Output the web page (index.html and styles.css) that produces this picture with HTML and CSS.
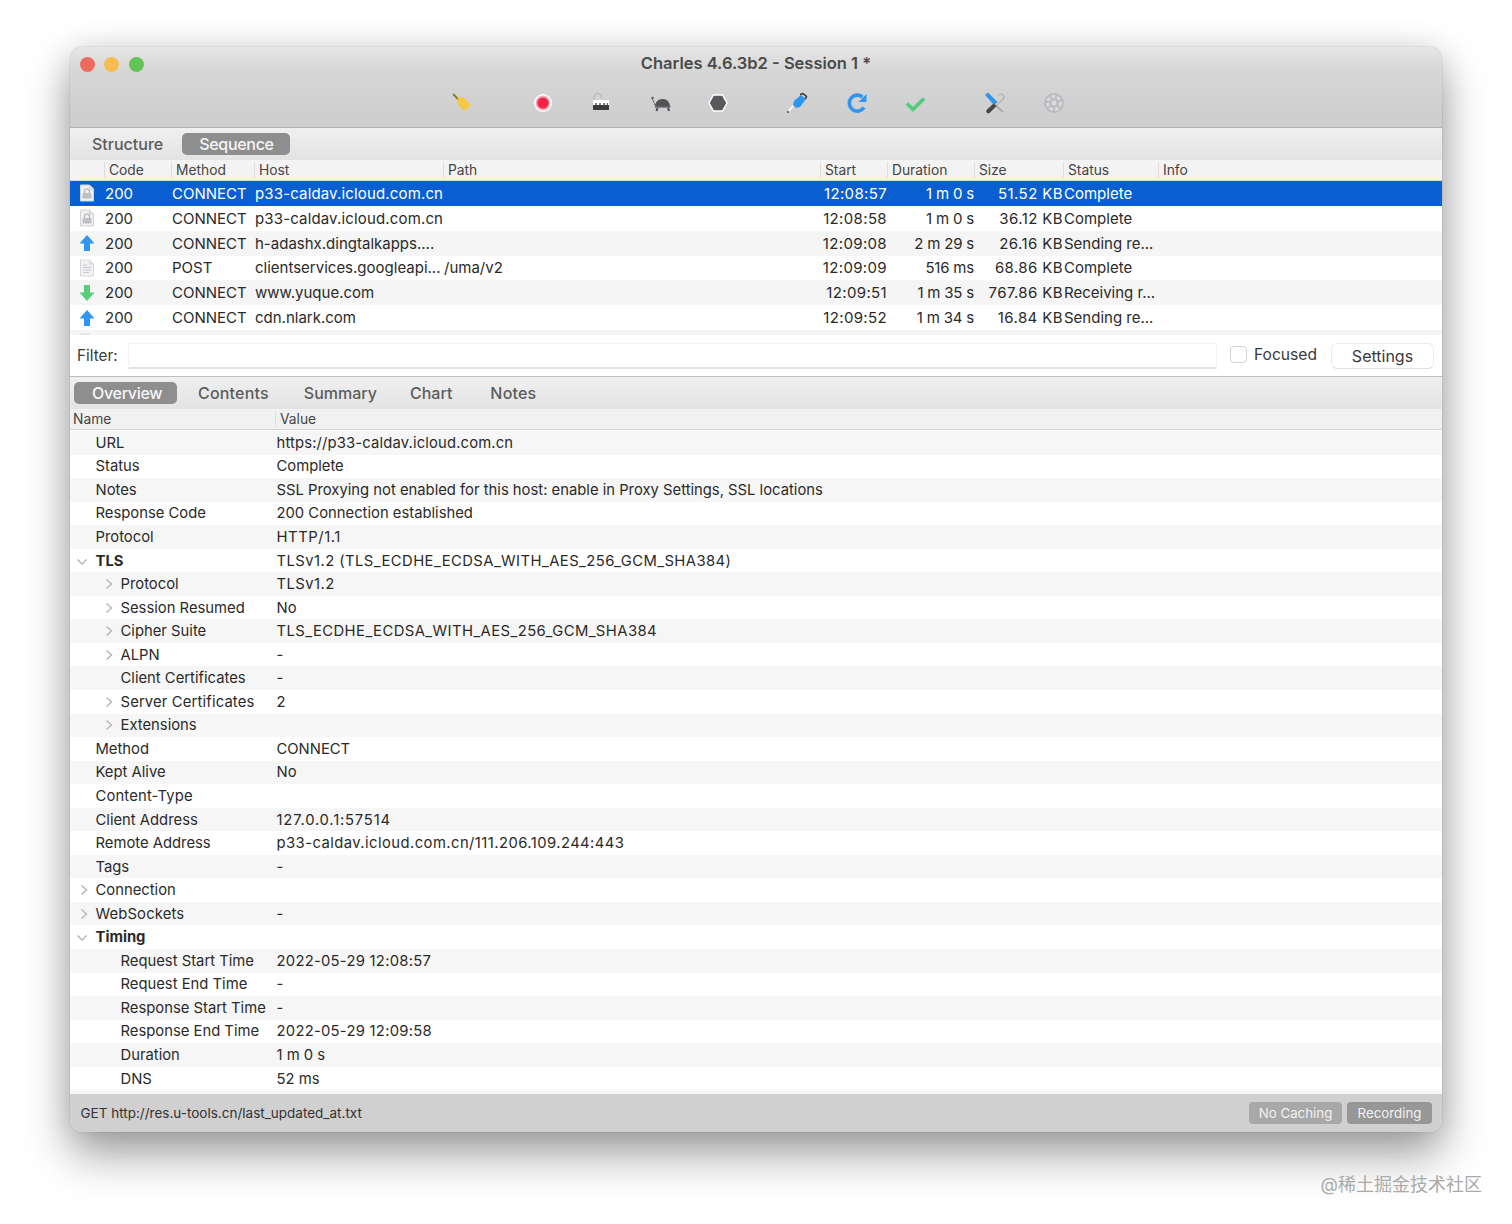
FILE: index.html
```html
<!DOCTYPE html>
<html lang="en">
<head>
  <meta charset="UTF-8" />
  <title>Charles 4.6.3b2 - Session 1 *</title>
  <link rel="stylesheet" href="styles.css">
</head>
<body>
  <svg class="defs" width="0" height="0">
    <symbol id="doc" viewBox="0 0 16 18">
      <path d="M1.500 1h9l4 4v12h-13z" fill="#f0f0f2" stroke="#d4d4d8"/>
      <path d="M10.500 1v4h4" fill="#e0e0e4" stroke="#d4d4d8"/>
      <path d="M5.500 9V7.500a2.500 2.500 0 0 1 5 0V9" fill="none" stroke="#b4b4b8" stroke-width="1.200"/>
      <rect x="3.500" y="9" width="9" height="5.500" rx="1" fill="#c0c0c4"/>
    </symbol>
    <symbol id="textdoc" viewBox="0 0 16 18">
      <path d="M1.500 1h9l4 4v12h-13z" fill="#f2f2f4" stroke="#d8d8dc"/>
      <path d="M10.500 1v4h4" fill="#e4e4e8" stroke="#d8d8dc"/>
      <path d="M4 6h4M4 8.500h8M4 11h8M4 13.500h6" stroke="#c8c8cc" stroke-width="1"/>
    </symbol>
    <symbol id="up" viewBox="0 0 16 18">
      <path d="M8 1l7.500 8.500H11V17H5V9.500H.5z" fill="#2f95ee"/>
    </symbol>
    <symbol id="down" viewBox="0 0 16 18">
      <path d="M8 17L.5 8.500H5V1h6v7.500h4.500z" fill="#57cf78"/>
    </symbol>
    <symbol id="twist-r" viewBox="0 0 10 12">
      <path d="M2.500 1.500L7.500 6l-5 4.500" fill="none" stroke="#b8b8b8" stroke-width="1.500"/>
    </symbol>
    <symbol id="twist-d" viewBox="0 0 12 10">
      <path d="M1.500 2.500L6 7l4.500-4.500" fill="none" stroke="#b8b8b8" stroke-width="1.500"/>
    </symbol>
  </svg>

  <div class="window">
    <header class="titlebar">
      <div class="title-row">
        <div class="lights">
          <span class="light red"></span>
          <span class="light yellow"></span>
          <span class="light green"></span>
        </div>
        <div class="title">Charles 4.6.3b2 - Session 1 *</div>
      </div>
      <div class="toolbar">
        <svg class="tool t-broom" viewBox="0 0 22 22">
          <path d="M2 2l6 6" stroke="#8f7a35" stroke-width="2"/>
          <path d="M7 6l5-1 8 8-7 6-7-8z" fill="#f4c93c"/>
        </svg>
        <svg class="tool t-record" viewBox="0 0 22 22">
          <circle cx="11" cy="11" r="9" fill="#fff"/>
          <circle cx="11" cy="11" r="7.400" fill="#f3a9b6"/>
          <circle cx="11" cy="11" r="5.600" fill="#ee2449"/>
        </svg>
        <svg class="tool t-throttle" viewBox="0 0 22 22">
          <path d="M4 8V5a3.500 3.500 0 0 1 7 0v1" fill="none" stroke="#bdbdbd" stroke-width="1.500"/>
          <rect x="3" y="8" width="16" height="5" fill="#fff"/>
          <rect x="3" y="13" width="16" height="5" fill="#3b3b3e"/>
          <path d="M5 12h2M9 12h2M13 12h2M16.500 12h1.500" stroke="#555" stroke-width="1.400"/>
        </svg>
        <svg class="tool t-turtle" viewBox="0 0 22 22">
          <path d="M5 15c0-5 3-8 7.500-8S20 10 20 15z" fill="#525357"/>
          <path d="M5 15h15.500" stroke="#6a6a6e" stroke-width="1.500"/>
          <path d="M7.500 16l-1 3M18 16l1 3" stroke="#525357" stroke-width="2.200"/>
          <path d="M5 13L2.500 7" stroke="#5a5a5a" stroke-width="1.200" stroke-dasharray="2 1"/>
          <circle cx="2.500" cy="6" r="1.200" fill="#525357"/>
        </svg>
        <svg class="tool t-stop" viewBox="0 0 22 22">
          <path d="M6.500 3h9L20 11l-4.500 8h-9L2 11z" fill="#59595d" stroke="#fff" stroke-width="1.500"/>
        </svg>
        <svg class="tool t-pen" viewBox="0 0 22 22">
          <path d="M1.500 20.500l6-7" stroke="#f2f2f2" stroke-width="2"/>
          <circle cx="2" cy="20" r="1" fill="#444"/>
          <path d="M8 9l7-6 5 4-6 8-4 1-3-3z" fill="#2f95ee"/>
          <path d="M14 2.500l3-1 3.500 3-1 2.500" fill="none" stroke="#333" stroke-width="1.500"/>
        </svg>
        <svg class="tool t-repeat" viewBox="0 0 22 22">
          <path d="M18 15.500A8 8 0 1 1 16.500 5" fill="none" stroke="#2f95ee" stroke-width="3.600"/>
          <path d="M12.500 10h8V2z" fill="#2f95ee"/>
        </svg>
        <svg class="tool t-check" viewBox="0 0 22 22">
          <path d="M3 11.500l6 6 11-11" fill="none" stroke="#52cc7c" stroke-width="3.600"/>
        </svg>
        <svg class="tool t-tools" viewBox="0 0 22 22">
          <path d="M14.500 3.500a3 3 0 1 1 3.500 4.500L6 20" fill="none" stroke="#b4b4b8" stroke-width="1.300"/>
          <path d="M11 13l8 7" stroke="#a8a8ac" stroke-width="1.700"/>
          <path d="M1 3l3-2.500 9.500 9.500-3.500 3z" fill="#2f95ee"/>
          <path d="M9.500 11.500L2.500 18a2.200 2.200 0 0 0 3 3l7-7z" fill="#45464a"/>
        </svg>
        <svg class="tool t-gear" viewBox="0 0 22 22">
          <circle cx="11" cy="11" r="10" fill="#bcbcc0"/>
          <circle cx="11" cy="11" r="6.500" fill="none" stroke="#dadade" stroke-width="3" stroke-dasharray="3.500 2"/>
          <circle cx="11" cy="11" r="2.500" fill="#dadade"/>
        </svg>
      </div>
    </header>

    <div class="tabs tabs-top">
      <span class="tab">Structure</span>
      <span class="tab active">Sequence</span>
    </div>

    <div class="req-head">
      <span class="h-icon"></span>
      <span class="h-code">Code</span>
      <span class="h-method">Method</span>
      <span class="h-host">Host</span>
      <span class="h-path">Path</span>
      <span class="h-start">Start</span>
      <span class="h-dur">Duration</span>
      <span class="h-size">Size</span>
      <span class="h-status">Status</span>
      <span class="h-info">Info</span>
    </div>

    <div class="req-list">
      <div class="req selected">
        <span class="c-icon"><svg><use href="#doc"/></svg></span>
        <span class="c-code">200</span><span class="c-method">CONNECT</span>
        <span class="c-host sp-1">p33-caldav.icloud.com.cn</span><span class="c-path"></span>
        <span class="c-start">12:08:57</span><span class="c-dur">1 m 0 s</span>
        <span class="c-size">51.52 KB</span><span class="c-status">Complete</span>
      </div>
      <div class="req">
        <span class="c-icon"><svg><use href="#doc"/></svg></span>
        <span class="c-code">200</span><span class="c-method">CONNECT</span>
        <span class="c-host sp-1">p33-caldav.icloud.com.cn</span><span class="c-path"></span>
        <span class="c-start">12:08:58</span><span class="c-dur">1 m 0 s</span>
        <span class="c-size">36.12 KB</span><span class="c-status">Complete</span>
      </div>
      <div class="req">
        <span class="c-icon"><svg><use href="#up"/></svg></span>
        <span class="c-code">200</span><span class="c-method">CONNECT</span>
        <span class="c-host">h-adashx.dingtalkapps....</span><span class="c-path"></span>
        <span class="c-start">12:09:08</span><span class="c-dur">2 m 29 s</span>
        <span class="c-size">26.16 KB</span><span class="c-status">Sending re...</span>
      </div>
      <div class="req">
        <span class="c-icon"><svg><use href="#textdoc"/></svg></span>
        <span class="c-code">200</span><span class="c-method">POST</span>
        <span class="c-host">clientservices.googleapi...</span><span class="c-path">/uma/v2</span>
        <span class="c-start">12:09:09</span><span class="c-dur">516 ms</span>
        <span class="c-size">68.86 KB</span><span class="c-status">Complete</span>
      </div>
      <div class="req">
        <span class="c-icon"><svg><use href="#down"/></svg></span>
        <span class="c-code">200</span><span class="c-method">CONNECT</span>
        <span class="c-host">www.yuque.com</span><span class="c-path"></span>
        <span class="c-start">12:09:51</span><span class="c-dur">1 m 35 s</span>
        <span class="c-size">767.86 KB</span><span class="c-status">Receiving r...</span>
      </div>
      <div class="req">
        <span class="c-icon"><svg><use href="#up"/></svg></span>
        <span class="c-code">200</span><span class="c-method">CONNECT</span>
        <span class="c-host">cdn.nlark.com</span><span class="c-path"></span>
        <span class="c-start">12:09:52</span><span class="c-dur">1 m 34 s</span>
        <span class="c-size">16.84 KB</span><span class="c-status">Sending re...</span>
      </div>
      <div class="req">
        <span class="c-icon"><svg><use href="#textdoc"/></svg></span>
      </div>
    </div>

    <div class="filter">
      <label class="filter-label">Filter:</label>
      <div class="filter-input"></div>
      <span class="checkbox"></span>
      <span class="focused">Focused</span>
      <span class="settings">Settings</span>
    </div>

    <div class="tabs tabs-bottom">
      <span class="tab active">Overview</span>
      <span class="tab">Contents</span>
      <span class="tab">Summary</span>
      <span class="tab">Chart</span>
      <span class="tab">Notes</span>
    </div>

    <div class="ov-head">
      <span class="ov-head-name">Name</span>
      <span class="ov-head-value">Value</span>
    </div>

    <div class="ov-list">
      <div class="ov"><span class="k">URL</span><span class="v sp-1">https://p33-caldav.icloud.com.cn</span></div>
      <div class="ov"><span class="k">Status</span><span class="v">Complete</span></div>
      <div class="ov"><span class="k">Notes</span><span class="v">SSL Proxying not enabled for this host: enable in Proxy Settings, SSL locations</span></div>
      <div class="ov"><span class="k">Response Code</span><span class="v">200 Connection established</span></div>
      <div class="ov"><span class="k">Protocol</span><span class="v sp-5">HTTP/1.1</span></div>
      <div class="ov"><span class="k bold"><svg class="tw-d"><use href="#twist-d"/></svg>TLS</span><span class="v sp-4">TLSv1.2 (TLS_ECDHE_ECDSA_WITH_AES_256_GCM_SHA384)</span></div>
      <div class="ov"><span class="k sub"><svg class="tw-r"><use href="#twist-r"/></svg>Protocol</span><span class="v sp-4">TLSv1.2</span></div>
      <div class="ov"><span class="k sub"><svg class="tw-r"><use href="#twist-r"/></svg>Session Resumed</span><span class="v">No</span></div>
      <div class="ov"><span class="k sub"><svg class="tw-r"><use href="#twist-r"/></svg>Cipher Suite</span><span class="v sp-4">TLS_ECDHE_ECDSA_WITH_AES_256_GCM_SHA384</span></div>
      <div class="ov"><span class="k sub"><svg class="tw-r"><use href="#twist-r"/></svg>ALPN</span><span class="v">-</span></div>
      <div class="ov"><span class="k sub">Client Certificates</span><span class="v">-</span></div>
      <div class="ov"><span class="k sub sp-1"><svg class="tw-r"><use href="#twist-r"/></svg>Server Certificates</span><span class="v">2</span></div>
      <div class="ov"><span class="k sub"><svg class="tw-r"><use href="#twist-r"/></svg>Extensions</span><span class="v"></span></div>
      <div class="ov"><span class="k">Method</span><span class="v">CONNECT</span></div>
      <div class="ov"><span class="k">Kept Alive</span><span class="v">No</span></div>
      <div class="ov"><span class="k sp-1">Content-Type</span><span class="v"></span></div>
      <div class="ov"><span class="k">Client Address</span><span class="v sp-8">127.0.0.1:57514</span></div>
      <div class="ov"><span class="k">Remote Address</span><span class="v sp-4">p33-caldav.icloud.com.cn/111.206.109.244:443</span></div>
      <div class="ov"><span class="k">Tags</span><span class="v">-</span></div>
      <div class="ov"><span class="k"><svg class="tw-r top"><use href="#twist-r"/></svg>Connection</span><span class="v"></span></div>
      <div class="ov"><span class="k sp-1"><svg class="tw-r top"><use href="#twist-r"/></svg>WebSockets</span><span class="v">-</span></div>
      <div class="ov"><span class="k bold"><svg class="tw-d"><use href="#twist-d"/></svg>Timing</span><span class="v"></span></div>
      <div class="ov"><span class="k sub">Request Start Time</span><span class="v sp-3">2022-05-29 12:08:57</span></div>
      <div class="ov"><span class="k sub">Request End Time</span><span class="v">-</span></div>
      <div class="ov"><span class="k sub">Response Start Time</span><span class="v">-</span></div>
      <div class="ov"><span class="k sub">Response End Time</span><span class="v sp-3">2022-05-29 12:09:58</span></div>
      <div class="ov"><span class="k sub">Duration</span><span class="v">1 m 0 s</span></div>
      <div class="ov"><span class="k sub">DNS</span><span class="v">52 ms</span></div>
      <div class="ov"></div>
    </div>

    <footer class="statusbar">
      <span class="status-url">GET http://res.u-tools.cn/last_updated_at.txt</span>
      <span class="pill light-pill">No Caching</span>
      <span class="pill rec-pill">Recording</span>
    </footer>
  </div>

  <div class="watermark">@稀土掘金技术社区</div>
</body>
</html>
```
FILE: styles.css
```css
* {
  margin: 0;
  padding: 0;
  box-sizing: border-box;
}

html, body {
  height: 100%;
  overflow: hidden;
}

body {
  position: relative;
  background: #fff;
  color: #2a2a2a;
  font-family: Inter, "Noto Sans CJK SC", sans-serif;
  font-size: 15px;
  padding: 47px 0 0 70px;
}

.defs {
  position: absolute;
}

.window {
  width: 1372px;
  height: 1085px;
  background: #fff;
  border-radius: 12px;
  overflow: hidden;
  display: flex;
  flex-direction: column;
  box-shadow: 0 0 1px rgba(0, 0, 0, 0.45), 0 22px 45px rgba(0, 0, 0, 0.38), 0 0 30px rgba(0, 0, 0, 0.1);
}

/* title bar */
.titlebar {
  height: 81px;
  flex: none;
  background: linear-gradient(#e6e6e6, #d6d6d6 30%, #cdcdcd);
  border-bottom: 1px solid #b5b5b5;
}

.title-row {
  position: relative;
  height: 32px;
  display: flex;
  align-items: center;
  justify-content: center;
}

.lights {
  position: absolute;
  left: 9.5px;
  top: 10px;
  display: flex;
  gap: 9.7px;
}

.light {
  width: 15px;
  height: 15px;
  border-radius: 50%;
}

.red { background: #ee6a5f; }
.yellow { background: #f5bd4f; }
.green { background: #61c454; }

.title {
  font-size: 16.5px;
  font-weight: 600;
  color: #4a4a4a;
}

.toolbar {
  display: flex;
  height: 48px;
  align-items: center;
  padding-left: 381px;
}

.tool {
  width: 22px;
  height: 22px;
  flex: none;
}

.t-record { margin-left: 59px; }
.t-throttle { margin-left: 36px; }
.t-turtle { margin-left: 38px; }
.t-stop { margin-left: 35px; }
.t-pen { margin-left: 57px; }
.t-repeat { margin-left: 38px; }
.t-check { margin-left: 36px; }
.t-tools { margin-left: 58px; }
.t-gear { margin-left: 37px; }

/* tabs */
.tabs {
  flex: none;
  height: 32px;
  display: flex;
  align-items: center;
  background: linear-gradient(#f0f0f0, #e3e3e3);
  color: #5c5c5c;
  font-size: 16px;
  font-weight: 500;
}

.tabs-top {
  padding-left: 22px;
  gap: 19px;
}

.tab.active {
  background: #8e8e8e;
  color: #f6f6f6;
  border-radius: 5px;
  height: 22px;
  line-height: 22px;
  padding: 0 16px 0 17px;
  letter-spacing: -0.3px;
}

.tabs-bottom {
  padding-left: 4px;
}

.tabs-bottom .tab {
  margin-right: 35px;
}

.tabs-bottom .tab.active {
  width: 103px;
  padding: 0 0 0 18px;
  margin-right: 21px;
}

.tabs-bottom .tab:nth-child(2) { letter-spacing: 0.2px; }
.tabs-bottom .tab:nth-child(3) { margin-right: 33px; }
.tabs-bottom .tab:nth-child(4) { margin-right: 38px; }
.tabs-bottom .tab:nth-child(5) { letter-spacing: 0.2px; }

/* request table */
.req-head {
  flex: none;
  height: 21px;
  display: flex;
  align-items: center;
  background: #f3f3f3;
  border-bottom: 1px solid #dcdcdc;
  font-size: 13.8px;
  color: #444;
}

.req-head span {
  flex: none;
  height: 16px;
  line-height: 16px;
  padding-left: 4px;
  border-left: 1px solid #dedede;
}

.req-head .h-icon { width: 34px; padding: 0; border: 0; }
.h-code { width: 67px; }
.h-method { width: 83px; }
.h-host { width: 189px; }
.h-path { width: 377px; }
.h-start { width: 67px; }
.h-dur { width: 87px; }
.h-size { width: 89px; }
.h-status { width: 95px; }

.req-list {
  flex: none;
  height: 154px;
  overflow: hidden;
}

.req {
  height: 24.85px;
  display: flex;
  align-items: center;
  white-space: nowrap;
}

.req:nth-child(odd) { background: #f5f5f5; }

.req.selected {
  background: #0a5fd0;
  color: #fff;
}

.req > span { flex: none; }

.c-icon { width: 35px; height: 18px; padding-left: 9px; }
.c-icon svg { width: 16px; height: 18px; display: block; }
.c-code { width: 67px; }
.c-method { width: 83px; }
.c-host { width: 189px; }
.c-path { width: 364px; }
.c-start { width: 79px; text-align: right; letter-spacing: 0.35px; }
.c-dur { width: 87px; text-align: right; letter-spacing: -0.2px; }
.c-size { width: 90px; padding-right: 1px; text-align: right; letter-spacing: 0.4px; }
.c-status { width: 95px; }

/* filter row */
.filter {
  flex: none;
  height: 42px;
  display: flex;
  align-items: center;
  padding: 0 8px 0 7px;
  border-bottom: 1px solid #bdbdbd;
  color: #3a3a3a;
}

.filter-label { width: 51px; font-size: 15.3px; }

.filter-input {
  width: 1089px;
  height: 26px;
  margin-top: 1px;
  background: #fff;
  border: 1px solid #f3f3f3;
  border-bottom: 2px solid #e4e4e4;
}

.checkbox {
  width: 17px;
  height: 17px;
  margin: -3px 0 0 13px;
  border: 1px solid #d2d2d2;
  border-radius: 4px;
}

.focused {
  margin: -2px 0 0 7px;
  font-size: 15.6px;
}

.settings {
  margin-left: auto;
  width: 103px;
  height: 26px;
  line-height: 25px;
  text-align: center;
  font-size: 16px;
  border: 1px solid #ececec;
  border-bottom-color: #dfdfdf;
  border-radius: 6px;
}

/* overview table */
.ov-head {
  flex: none;
  height: 21px;
  display: flex;
  align-items: center;
  background: #f1f1f1;
  border-bottom: 1px solid #cfcfcf;
  font-size: 13.8px;
  color: #444;
}

.ov-head-name { width: 205px; padding-left: 3px; }

.ov-head-value {
  height: 16px;
  line-height: 16px;
  padding-left: 4px;
  border-left: 1px solid #dedede;
}

.ov-list {
  flex: 1;
  min-height: 0;
  overflow: hidden;
  padding-top: 1px;
  font-size: 14.8px;
}

.ov {
  height: 23.56px;
  display: flex;
  align-items: center;
  white-space: nowrap;
}

.ov:nth-child(odd) { background: #f6f6f6; }

.k {
  position: relative;
  width: 206.5px;
  flex: none;
  padding-left: 25.5px;
}

.k.sub { padding-left: 50.5px; }
.k.bold { font-weight: 700; }

/* numbers and capitals run wider in the original font */
.sp-1 { letter-spacing: 0.15px; }
.sp-3 { letter-spacing: 0.26px; }
.sp-4 { letter-spacing: 0.44px; }
.sp-5 { letter-spacing: 0.55px; }
.sp-8 { letter-spacing: 0.8px; }

.tw-r, .tw-d {
  position: absolute;
  top: 3px;
}

.tw-r {
  left: 33.5px;
  width: 10px;
  height: 12px;
}

.tw-r.top { left: 8.5px; }

.tw-d {
  left: 6px;
  top: 5px;
  width: 12px;
  height: 10px;
}

/* status bar */
.statusbar {
  flex: none;
  height: 38px;
  display: flex;
  align-items: center;
  gap: 5px;
  padding: 0 10px 0 10.5px;
  background: #d0d0d0;
  font-size: 13.5px;
  color: #333;
}

.status-url { margin-right: auto; }

.pill {
  height: 22px;
  line-height: 22px;
  text-align: center;
  border-radius: 4px;
  background: #979797;
  color: #f2f2f2;
  font-size: 13.3px;
}

.light-pill { width: 93px; background: #a8a8a8; }
.rec-pill { width: 85px; }

.watermark {
  position: absolute;
  right: 30px;
  top: 1170px;
  font-size: 18px;
  color: #aaa;
}
```
